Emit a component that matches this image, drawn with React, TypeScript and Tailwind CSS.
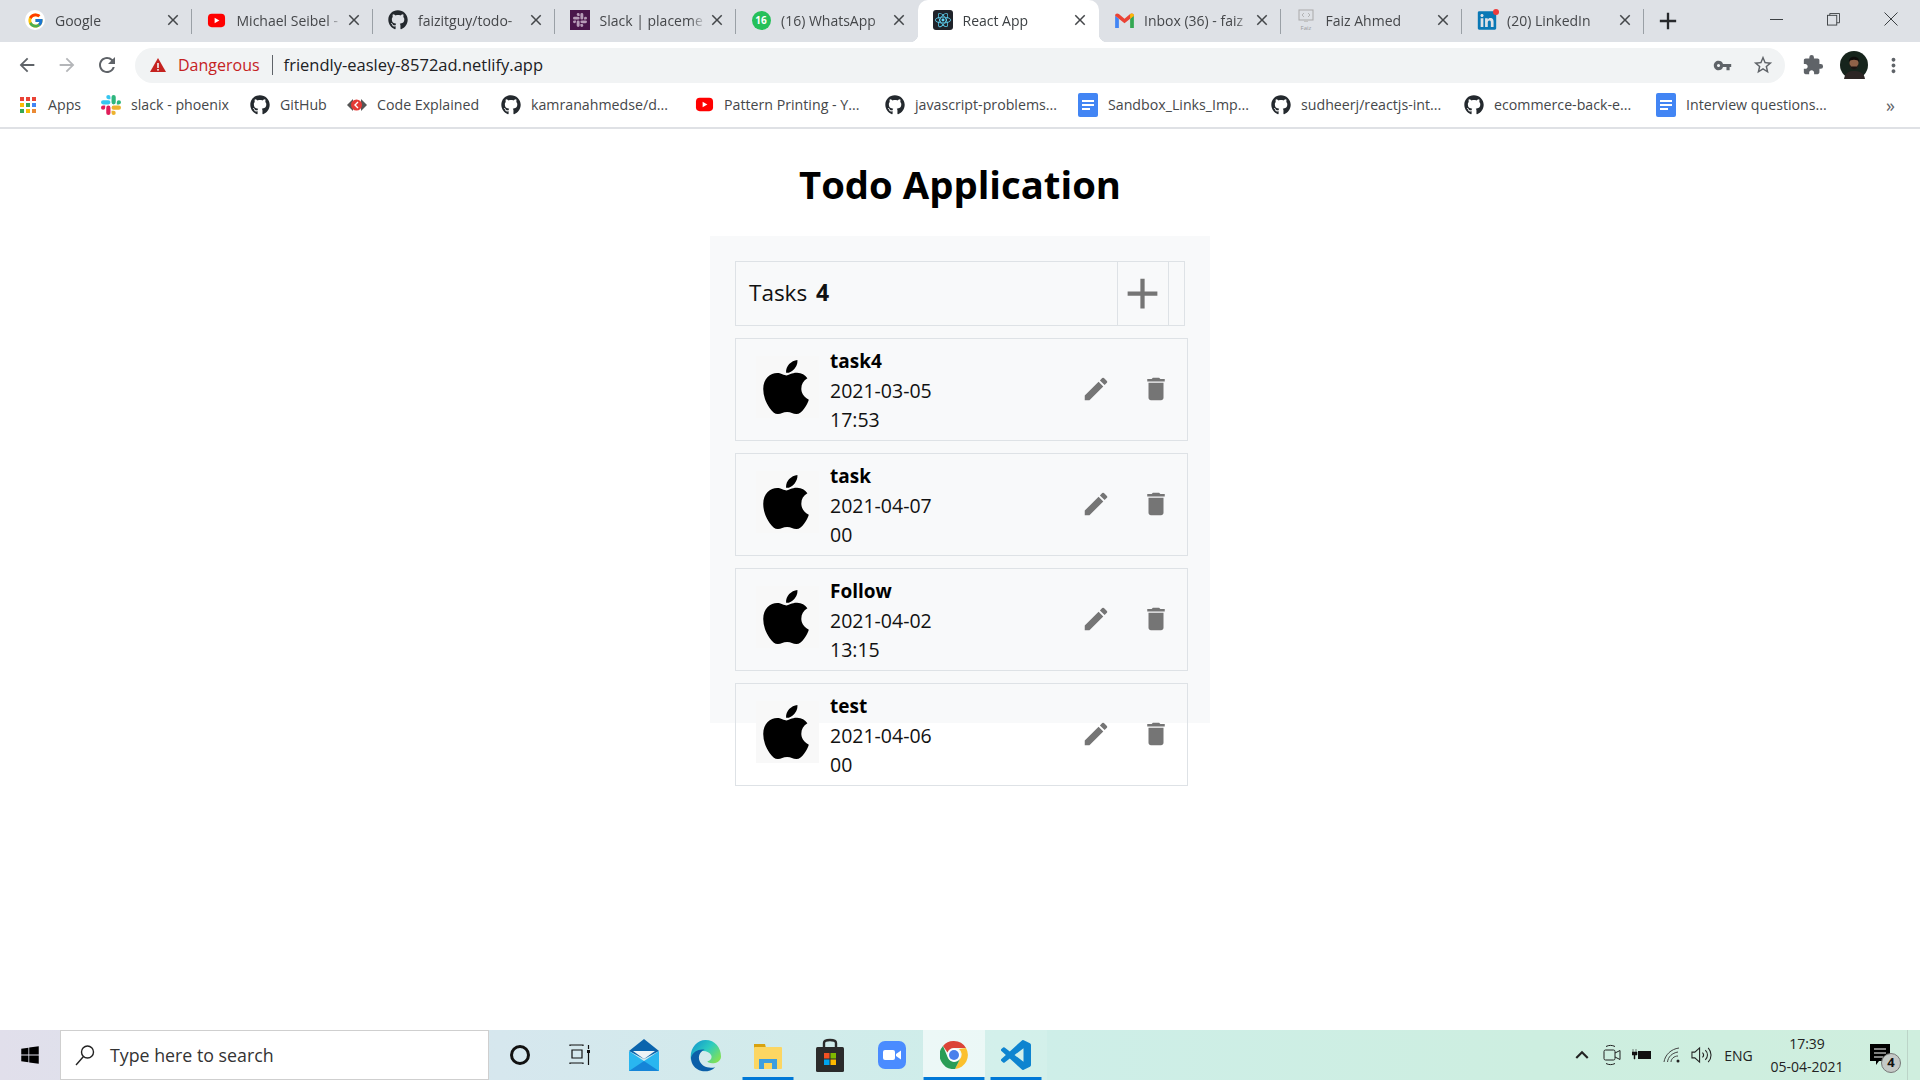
// App.tsx
import type { ReactNode } from "react";
import { FaApple, FaGithub, FaLinkedin, FaWindows } from "react-icons/fa";
import { FcGoogle } from "react-icons/fc";
import { MdAdd, MdArrowBack, MdArrowForward, MdClose, MdDelete, MdEdit, MdExtension, MdKeyboardArrowUp, MdMoreVert, MdRefresh, MdStarBorder, MdVpnKey } from "react-icons/md";
import { SiReact, SiSlack } from "react-icons/si";

const YouTubeIcon = () => (
  <svg viewBox="0 0 20 20" className="w-[19px] h-[19px]">
    <rect x="1" y="3" width="18" height="14" rx="4" fill="#f00" />
    <polygon points="8,7 8,13 13,10" fill="#fff" />
  </svg>
);

const SlackColorIcon = () => (
  <svg viewBox="0 0 24 24" className="w-[20px] h-[20px]">
    <path fill="#e01e5a" d="M5.042 15.165a2.528 2.528 0 0 1-2.52 2.523A2.528 2.528 0 0 1 0 15.165a2.527 2.527 0 0 1 2.522-2.52h2.52v2.52zM6.313 15.165a2.527 2.527 0 0 1 2.521-2.52 2.527 2.527 0 0 1 2.521 2.52v6.313A2.528 2.528 0 0 1 8.834 24a2.528 2.528 0 0 1-2.521-2.522v-6.313z" />
    <path fill="#36c5f0" d="M8.834 5.042a2.528 2.528 0 0 1-2.521-2.52A2.528 2.528 0 0 1 8.834 0a2.528 2.528 0 0 1 2.521 2.522v2.52H8.834zM8.834 6.313a2.528 2.528 0 0 1 2.521 2.521 2.528 2.528 0 0 1-2.521 2.521H2.522A2.528 2.528 0 0 1 0 8.834a2.528 2.528 0 0 1 2.522-2.521h6.312z" />
    <path fill="#2eb67d" d="M18.956 8.834a2.528 2.528 0 0 1 2.522-2.521A2.528 2.528 0 0 1 24 8.834a2.528 2.528 0 0 1-2.522 2.521h-2.522V8.834zM17.688 8.834a2.528 2.528 0 0 1-2.523 2.521 2.527 2.527 0 0 1-2.52-2.521V2.522A2.527 2.527 0 0 1 15.165 0a2.528 2.528 0 0 1 2.523 2.522v6.312z" />
    <path fill="#ecb22e" d="M15.165 18.956a2.528 2.528 0 0 1 2.523 2.522A2.528 2.528 0 0 1 15.165 24a2.527 2.527 0 0 1-2.52-2.522v-2.522h2.52zM15.165 17.688a2.527 2.527 0 0 1-2.52-2.523 2.526 2.526 0 0 1 2.52-2.52h6.313A2.527 2.527 0 0 1 24 15.165a2.528 2.528 0 0 1-2.522 2.523h-6.313z" />
  </svg>
);

const AppsIcon = () => (
  <svg viewBox="0 0 18 18" className="w-[18px] h-[18px]">
    {[
      [1, 1, "#ea4335"], [7, 1, "#ea4335"], [13, 1, "#ea4335"],
      [1, 7, "#fbbc05"], [7, 7, "#34a853"], [13, 7, "#4285f4"],
      [1, 13, "#34a853"], [7, 13, "#fbbc05"], [13, 13, "#ea8a35"],
    ].map(([x, y, c]) => (
      <rect key={`${x}-${y}`} x={x as number} y={y as number} width="4" height="4" fill={c as string} />
    ))}
  </svg>
);

const CodeExplainedIcon = () => (
  <svg viewBox="0 0 20 20" className="w-[20px] h-[20px]">
    <polygon points="0,10 6,4 6,16" fill="#555" />
    <polygon points="20,10 14,4 14,16" fill="#555" />
    <circle cx="9.5" cy="10" r="5.5" fill="#e53935" />
    <path d="M11 7 L8 10 L11 13" stroke="#fff" strokeWidth="1.4" fill="none" />
  </svg>
);

const DocIcon = () => (
  <svg viewBox="0 0 20 24" className="w-[20px] h-[24px]">
    <rect x="0" y="0" width="20" height="24" rx="2" fill="#4285f4" />
    <rect x="4" y="7" width="12" height="2" fill="#fff" />
    <rect x="4" y="11" width="12" height="2" fill="#fff" />
    <rect x="4" y="15" width="8" height="2" fill="#fff" />
  </svg>
);

const GmailIcon = () => (
  <svg viewBox="0 0 20 16" className="w-[19px] h-[15px]">
    <path d="M0 3 L0 16 L4 16 L4 6 Z" fill="#4285f4" />
    <path d="M20 3 L20 16 L16 16 L16 6 Z" fill="#34a853" />
    <path d="M0 3 C0 0 2.5 0 4 1 L10 6 L16 1 C17.5 0 20 0 20 3 L16 6 L10 11 L4 6 Z" fill="#ea4335" />
    <path d="M16 1 C17.5 0 20 0 20 3 L16 6 Z" fill="#fbbc05" />
  </svg>
);

const tabs: { title: string; icon: ReactNode; active?: boolean; nosep?: boolean }[] = [
  { title: "Google", icon: <span className="flex w-[20px] h-[20px] items-center justify-center rounded-full bg-white"><FcGoogle size={17} /></span> },
  { title: "Michael Seibel -", icon: <YouTubeIcon /> },
  { title: "faizitguy/todo-", icon: <FaGithub size={20} color="#24292e" /> },
  { title: "Slack | placeme", icon: <span className="flex w-[20px] h-[20px] items-center justify-center bg-[#4a154b]"><SiSlack size={14} color="#b79bb8" /></span> },
  { title: "(16) WhatsApp", nosep: true, icon: <span className="flex w-[19px] h-[19px] items-center justify-center rounded-full bg-[#25c05a] text-[10px] font-bold text-white">16</span> },
  { title: "React App", active: true, nosep: true, icon: <span className="flex w-[20px] h-[20px] items-center justify-center rounded-[3px] bg-[#20232a]"><SiReact size={16} color="#61dafb" /></span> },
  { title: "Inbox (36) - faiz", icon: <GmailIcon /> },
  {
    title: "Faiz Ahmed",
    icon: (
      <svg viewBox="0 0 20 24" className="w-[20px] h-[24px]">
        <rect x="3" y="2" width="14" height="10" fill="none" stroke="#a9a9a9" strokeWidth="1" />
        <path d="M8 5 L6 7 L8 9 M12 5 L14 7 L12 9" stroke="#a9a9a9" fill="none" strokeWidth="0.8" />
        <rect x="8" y="12" width="4" height="2" fill="#c4c4c4" />
        <text x="10" y="22" textAnchor="middle" fontSize="6" fill="#9a9a9a">Faiz</text>
      </svg>
    ),
  },
  {
    title: "(20) LinkedIn",
    icon: (
      <span className="relative flex w-[20px] h-[20px] items-center justify-center">
        <FaLinkedin size={21} color="#0a78b5" />
        <span className="absolute -top-[1px] -right-[2px] h-[6px] w-[6px] rounded-full bg-[#ee3b3b]" />
      </span>
    ),
  },
];

const bookmarks: { label: string; icon: ReactNode; w: string }[] = [
  { label: "Apps", w: "w-[83px]", icon: <AppsIcon /> },
  { label: "slack - phoenix", w: "w-[149px]", icon: <SlackColorIcon /> },
  { label: "GitHub", w: "w-[97px]", icon: <FaGithub size={20} color="#24292e" /> },
  { label: "Code Explained", w: "w-[154px]", icon: <CodeExplainedIcon /> },
  { label: "kamranahmedse/d...", w: "w-[193px]", icon: <FaGithub size={20} color="#24292e" /> },
  { label: "Pattern Printing - Y...", w: "w-[191px]", icon: <YouTubeIcon /> },
  { label: "javascript-problems...", w: "w-[193px]", icon: <FaGithub size={20} color="#24292e" /> },
  { label: "Sandbox_Links_Imp...", w: "w-[193px]", icon: <DocIcon /> },
  { label: "sudheerj/reactjs-int...", w: "w-[193px]", icon: <FaGithub size={20} color="#24292e" /> },
  { label: "ecommerce-back-e...", w: "w-[192px]", icon: <FaGithub size={20} color="#24292e" /> },
  { label: "Interview questions...", w: "w-[204px]", icon: <DocIcon /> },
];

const todos = [
  { title: "task4", date: "2021-03-05", time: "17:53" },
  { title: "task", date: "2021-04-07", time: "00" },
  { title: "Follow", date: "2021-04-02", time: "13:15" },
  { title: "test", date: "2021-04-06", time: "00" },
];

function TabStrip() {
  return (
    <div className="flex h-[42px] bg-[#dee1e6] pl-[10px]">
      {tabs.map((t) => (
        <div
          key={t.title}
          className={`relative flex h-[42px] w-[181.5px] shrink-0 items-center pb-[2px] pl-[15px] pr-[10px] text-[14px] ${t.active ? "rounded-t-[10px] bg-white text-[#3c4043] before:absolute before:bottom-0 before:-left-[8px] before:h-[8px] before:w-[8px] before:bg-[radial-gradient(circle_at_0_0,transparent_8px,white_8.5px)] after:absolute after:bottom-0 after:-right-[8px] after:h-[8px] after:w-[8px] after:bg-[radial-gradient(circle_at_100%_0,transparent_8px,white_8.5px)]" : "text-[#45474a]"}`}
        >
          <span className="flex w-[20px] shrink-0 items-center justify-center">{t.icon}</span>
          <span className="ml-[10px] flex-1 overflow-hidden whitespace-nowrap [mask-image:linear-gradient(90deg,#000_85%,transparent)]">{t.title}</span>
          <MdClose size={18} className="ml-[2px] shrink-0 text-[#44474a]" />
          {!t.nosep && <span className="absolute right-0 top-[9px] h-[25px] w-px bg-[#9aa0a6]" />}
        </div>
      ))}
      <div className="ml-[14px] flex w-[20px] items-center justify-center">
        <MdAdd size={28} color="#27292c" className="shrink-0" />
      </div>
      <div className="ml-auto flex h-[38px] text-[#3c4043]">
        <div className="flex w-[57px] items-center justify-center">
          <span className="h-px w-[13px] bg-[#3c4043]" />
        </div>
        <div className="flex w-[57px] items-center justify-center">
          <svg viewBox="0 0 14 14" className="w-[13px] h-[13px]" fill="none" stroke="#3c4043">
            <rect x="0.5" y="2.5" width="10" height="10.5" />
            <path d="M3 2.5 V0.5 H13.5 V10.5 H10.5" />
          </svg>
        </div>
        <div className="flex w-[58px] items-center justify-center">
          <svg viewBox="0 0 14 14" className="w-[14px] h-[14px]" stroke="#3c4043">
            <path d="M0.5 0.5 L13.5 13.5 M13.5 0.5 L0.5 13.5" />
          </svg>
        </div>
      </div>
    </div>
  );
}

function Toolbar() {
  return (
    <div className="flex h-[41px] items-center bg-white pl-[7px] pt-[5px]">
      <div className="flex w-[40px] justify-center"><MdArrowBack size={22} color="#5f6368" /></div>
      <div className="flex w-[40px] justify-center"><MdArrowForward size={22} color="#b4b6b9" /></div>
      <div className="flex w-[40px] justify-center"><MdRefresh size={24} color="#5f6368" /></div>
      <div className="ml-[8px] flex h-[35px] w-[1650px] items-center rounded-full bg-[#f1f3f4] pl-[15px] text-[16px]">
        <svg viewBox="0 0 16 14" className="w-[16px] h-[14px]">
          <path d="M8 0 L16 14 L0 14 Z" fill="#c5221f" />
          <rect x="7.2" y="5" width="1.6" height="5" fill="#f1f3f4" />
          <rect x="7.2" y="11" width="1.6" height="1.6" fill="#f1f3f4" />
        </svg>
        <span className="ml-[12px] text-[#c5221f]">Dangerous</span>
        <span className="ml-[12px] mr-[11px] h-[20px] w-px bg-[#5f6368]" />
        <span className="text-[16.5px] text-[#202124]">friendly-easley-8572ad.netlify.app</span>
        <div className="ml-auto flex items-center pr-[11px]">
          <MdVpnKey size={19} color="#5f6368" />
          <MdStarBorder size={22} color="#5f6368" className="ml-[20px]" />
        </div>
      </div>
      <div className="flex w-[55px] justify-center"><MdExtension size={22} color="#5f6368" /></div>
      <div className="flex w-[28px] justify-center">
        <svg viewBox="0 0 28 28" className="w-[28px] h-[28px]">
          <circle cx="14" cy="14" r="14" fill="#16241c" />
          <path d="M4 28 C5 21 10 20 14 20 C19 20 24 21 25 28 Z" fill="#2c2524" />
          <ellipse cx="14" cy="12" rx="4.5" ry="6" fill="#8f6248" />
          <path d="M9 11 C8 4 20 4 19 11 C18 8 10 8 9 11 Z" fill="#0e0c0b" />
          <path d="M9.5 13 C10 20 18 20 18.5 13 L17 15.5 H11 Z" fill="#1b1412" />
        </svg>
      </div>
      <div className="flex w-[50px] justify-center"><MdMoreVert size={23} color="#5f6368" /></div>
    </div>
  );
}

function BookmarkBar() {
  return (
    <div className="flex h-[46px] items-center border-b-2 border-[#dfe1e5] bg-white pl-[18px] text-[14.2px] text-[#45474a]">
      {bookmarks.map((b) => (
        <div key={b.label} className={`flex shrink-0 items-center ${b.w}`}>
          <span className="flex w-[20px] shrink-0 items-center justify-center">{b.icon}</span>
          <span className="ml-[10px] whitespace-nowrap">{b.label}</span>
        </div>
      ))}
      <span className="ml-[26px] text-[18px] leading-none text-[#5f6368]">»</span>
    </div>
  );
}

function TodoCard({ title, date, time }: { title: string; date: string; time: string }) {
  return (
    <div className="mb-[12px] flex h-[103px] w-[453px] items-center border border-[#dee2e6] pl-[20px] text-[19.5px] leading-[29px] text-[#111]">
      <div className="mt-[17px] flex h-[62px] w-[63px] shrink-0 items-center justify-center self-start bg-[#f8f8f8]">
        <FaApple size={62} color="#000" className="mr-[3px] shrink-0" />
      </div>
      <div className="ml-[11px] self-start pt-[8px]">
        <div className="text-[19px] font-bold text-black">{title}</div>
        <div>{date}</div>
        <div>{time}</div>
      </div>
      <div className="ml-auto mb-[2px] flex pr-[1px]">
        <div className="flex w-[60px] justify-center"><MdEdit size={30} color="#757575" /></div>
        <div className="flex w-[60px] justify-center"><MdDelete size={30} color="#757575" /></div>
      </div>
    </div>
  );
}

function TodoPage() {
  return (
    <main className="flex flex-1 flex-col items-center bg-white pt-[25px] font-['Open_Sans',sans-serif]">
      <h1 className="text-[38.3px] font-bold leading-[60px] text-black">Todo Application</h1>
      <section className="mt-[22px] h-[487px] w-[500px] bg-[#f8f9fa] p-[25px]">
        <div className="mb-[12px] flex h-[65px] w-[450px] items-center border border-[#dee2e6]">
          <div className="mb-[2px] flex-1 pl-[13px] text-[22.5px] text-[#111]">
            Tasks <span className="ml-[3px] text-[23px] font-bold">{todos.length}</span>
          </div>
          <div className="flex h-full w-[52px] items-center justify-center border-x border-[#dee2e6]">
            <MdAdd size={51} color="#757575" className="mr-[1px] shrink-0" />
          </div>
          <div className="w-[15px]" />
        </div>
        {todos.map((t) => (
          <TodoCard key={t.title} {...t} />
        ))}
      </section>
    </main>
  );
}

function TaskCell({ children, underline, highlight, tint }: { children: ReactNode; underline?: string; highlight?: boolean; tint?: boolean }) {
  return (
    <div className={`relative flex h-full w-[62px] shrink-0 items-center justify-center ${highlight ? "bg-white/60" : ""} ${tint ? "bg-white/10" : ""}`}>
      {children}
      {underline && <span className={`absolute bottom-0 left-1/2 h-[3px] -translate-x-1/2 ${underline}`} />}
    </div>
  );
}

function Taskbar() {
  return (
    <footer className="flex h-[50px] shrink-0 items-center bg-[linear-gradient(90deg,#e1dfeb_0%,#d6e7ee_26%,#ceeee9_52%,#cdeee0_80%,#cfeede_100%)] text-[#202020]">
      <div className="flex w-[60px] shrink-0 justify-center"><FaWindows size={20} color="#000" /></div>
      <div className="flex h-[50px] w-[429px] shrink-0 items-center border border-[#cfcfcf] bg-white pl-[14px] text-[17.8px] text-[#333]">
        <svg viewBox="0 0 20 22" className="w-[20px] h-[22px]" fill="none" stroke="#222" strokeWidth="1.4">
          <circle cx="12.5" cy="8" r="6" />
          <path d="M8.5 12.5 L1 21" />
        </svg>
        <span className="ml-[15px]">Type here to search</span>
      </div>
      <TaskCell><span className="block h-[20px] w-[20px] rounded-full border-[3px] border-[#111]" /></TaskCell>
      <TaskCell>
        <svg viewBox="0 0 22 22" className="mr-[5px] w-[22px] h-[22px]" fill="none" stroke="#111" strokeWidth="1.2">
          <path d="M1 2 V1 H14 V2 M3 6 H13 V14 H3 Z M1 20 V19 H14 V20 M19.5 1 V5 M19.5 9 V21" />
          <rect x="18" y="6" width="3" height="3" fill="#111" stroke="none" />
        </svg>
      </TaskCell>
      <TaskCell>
        <svg viewBox="0 0 30 32" className="w-[30px] h-[32px]">
          <path d="M0 12 L15 0 L30 12 L15 20 Z" fill="#0a64ad" />
          <path d="M4 12 H26 L15 20 Z" fill="#eef3f6" />
          <path d="M0 12 L15 22 L30 12 V32 H0 Z" fill="#29b6f0" />
          <path d="M0 32 L15 22 L30 32 Z" fill="#1585d8" />
        </svg>
      </TaskCell>
      <TaskCell>
        <svg viewBox="0 0 32 34" className="mr-[2px] w-[31px] h-[33px]">
          <defs>
            <linearGradient id="edgeTop" x1="0" y1="0" x2="1" y2="0.7">
              <stop offset="0" stopColor="#0f8fd0" />
              <stop offset="0.55" stopColor="#2ccbc0" />
              <stop offset="1" stopColor="#7ee05a" />
            </linearGradient>
          </defs>
          <path d="M16 1 C26 1 32 9 32 18 C32 23 27 25 23 25 C20 25 18 24 18 23 C21 22 23 20 22 17 C20 12 12 11 8 14 C4 17 2 20 1 22 C-1 10 7 1 16 1 Z" fill="url(#edgeTop)" />
          <path d="M1 19 C3 13 9 10 15 11 C10 13 8 18 10 23 C12 28 19 31 26 29 C22 33 16 34 12 33 C5 31 1 26 1 19 Z" fill="#0b5fa8" />
        </svg>
      </TaskCell>
      <TaskCell underline="w-[51px] bg-[#0078d7]">
        <svg viewBox="0 0 28 28" className="w-[28px] h-[28px]">
          <path d="M0 3 H11 L12 7 H0 Z" fill="#d8a20f" />
          <rect x="0" y="6" width="28" height="22" rx="1" fill="#fcd662" />
          <path d="M5 28 V18 H23 V28 H18 V22 H10 V28 Z" fill="#3c9ee0" />
        </svg>
      </TaskCell>
      <TaskCell>
        <svg viewBox="0 0 30 34" className="w-[30px] h-[34px]">
          <path d="M9 9 V5 C9 1 21 1 21 5 V9" stroke="#2a2a2a" strokeWidth="2.4" fill="none" />
          <rect x="1" y="9" width="28" height="25" rx="1.5" fill="#2b2b2b" />
          <rect x="9" y="15" width="5.5" height="5.5" fill="#f25022" />
          <rect x="15.5" y="15" width="5.5" height="5.5" fill="#7fba00" />
          <rect x="9" y="21.5" width="5.5" height="5.5" fill="#00a4ef" />
          <rect x="15.5" y="21.5" width="5.5" height="5.5" fill="#ffb900" />
        </svg>
      </TaskCell>
      <TaskCell>
        <svg viewBox="0 0 28 28" className="w-[28px] h-[28px]">
          <rect width="28" height="28" rx="7" fill="#4a8cff" />
          <rect x="5" y="9" width="12" height="10" rx="2" fill="#fff" />
          <polygon points="18,13 23,9.5 23,18.5 18,15" fill="#fff" />
        </svg>
      </TaskCell>
      <TaskCell underline="w-[61px] bg-[#0078d7]" highlight>
        <svg viewBox="0 0 28 28" className="w-[28px] h-[28px]">
          <path d="M14 0 A14 14 0 0 1 26 7 H14 A7 7 0 0 0 7.5 11.5 L3 5 A14 14 0 0 1 14 0 Z" fill="#db4437" />
          <path d="M26 7 A14 14 0 0 1 15 28 L20 18 A7 7 0 0 0 19 8 Z" fill="#fbc02d" />
          <path d="M3 5 A14 14 0 0 0 15 28 L20 18 A7 7 0 0 1 8 17 Z" fill="#2a9d56" />
          <circle cx="14" cy="14" r="6.5" fill="#fff" />
          <circle cx="14" cy="14" r="5" fill="#4a80ec" />
        </svg>
      </TaskCell>
      <TaskCell underline="w-[51px] bg-[#0078d7]" tint>
        <svg viewBox="0 0 24 24" className="w-[30px] h-[30px]">
          <path fill="#0e84d0" d="M23.15 2.587L18.21.21a1.494 1.494 0 0 0-1.705.29l-9.46 8.63-4.12-3.128a.999.999 0 0 0-1.276.057L.327 7.261A1 1 0 0 0 .326 8.74L3.899 12 .326 15.26a1 1 0 0 0 .001 1.479L1.65 17.94a.999.999 0 0 0 1.276.057l4.12-3.128 9.46 8.63a1.492 1.492 0 0 0 1.704.29l4.942-2.377A1.5 1.5 0 0 0 24 20.06V3.939a1.5 1.5 0 0 0-.85-1.352zm-5.146 14.861L10.826 12l7.178-5.448v10.896z" />
        </svg>
      </TaskCell>
      <div className="ml-auto flex h-full items-center text-[#222]">
        <div className="flex w-[30px] justify-center"><MdKeyboardArrowUp size={26} color="#222" /></div>
        <div className="flex w-[30px] justify-center">
          <svg viewBox="0 0 18 22" className="w-[18px] h-[22px]" fill="none" stroke="#222">
            <rect x="1" y="6" width="11" height="10" rx="1.5" />
            <path d="M12 9 L17 6.5 V15.5 L12 13 M3 2.5 C6 1 9 1 12 2.5 M3 19.5 C6 21 9 21 12 19.5" />
          </svg>
        </div>
        <div className="flex w-[30px] justify-center">
          <svg viewBox="0 0 20 12" className="w-[20px] h-[12px]">
            <rect x="6" y="2" width="13" height="8" fill="#111" />
            <path d="M1 0 V3 M4 0 V3 M0 3 H5 V6 H3 V10 H2 V6 H0 Z" fill="#111" stroke="#111" strokeWidth="0.5" />
          </svg>
        </div>
        <div className="flex w-[30px] justify-center">
          <svg viewBox="0 0 18 16" className="w-[18px] h-[16px]" fill="none" stroke="#444" strokeWidth="1">
            <path d="M1 15 C2 8 8 2 16 1 M4.5 15 C5 10 9 6 15 5 M8 15 C8 12 11 9 15 9" />
            <circle cx="15" cy="14" r="1.5" fill="#222" stroke="none" />
          </svg>
        </div>
        <div className="flex w-[29px] justify-center">
          <svg viewBox="0 0 22 18" className="w-[21px] h-[18px]" fill="none" stroke="#222" strokeWidth="1.1">
            <path d="M1 6 H4 L9 1.5 V16.5 L4 12 H1 Z M12 6.5 C13.5 8 13.5 10 12 11.5 M15 4 C18 7 18 11 15 14 M18 1.5 C22 6 22 12 18 16.5" />
          </svg>
        </div>
        <div className="flex w-[45px] justify-center text-[14px]">ENG</div>
        <div className="flex w-[92px] flex-col items-center text-[14px] leading-[23px]">
          <span>17:39</span>
          <span>05-04-2021</span>
        </div>
        <div className="flex w-[54px] justify-center">
          <div className="relative h-[22px] w-[22px]">
            <svg viewBox="0 0 22 22" className="w-[22px] h-[22px]">
              <path d="M1 0 H21 V17 H10 L7 21 V17 H1 Z" fill="#000" />
              <path d="M5 5 H17 M5 9 H17 M5 13 H14" stroke="#fff" />
            </svg>
            <span className="absolute -right-[10px] top-[9px] flex h-[20px] w-[20px] items-center justify-center rounded-full border border-[#777] bg-[#c4c9c6] text-[13px] font-bold text-[#111]">4</span>
          </div>
        </div>
        <div className="h-full w-[13px] border-l border-[#bcd4c8]" />
      </div>
    </footer>
  );
}

export default function App() {
  return (
    <div className="flex h-screen w-[1920px] flex-col overflow-hidden font-['Open_Sans',sans-serif]">
      <TabStrip />
      <Toolbar />
      <BookmarkBar />
      <TodoPage />
      <Taskbar />
    </div>
  );
}
